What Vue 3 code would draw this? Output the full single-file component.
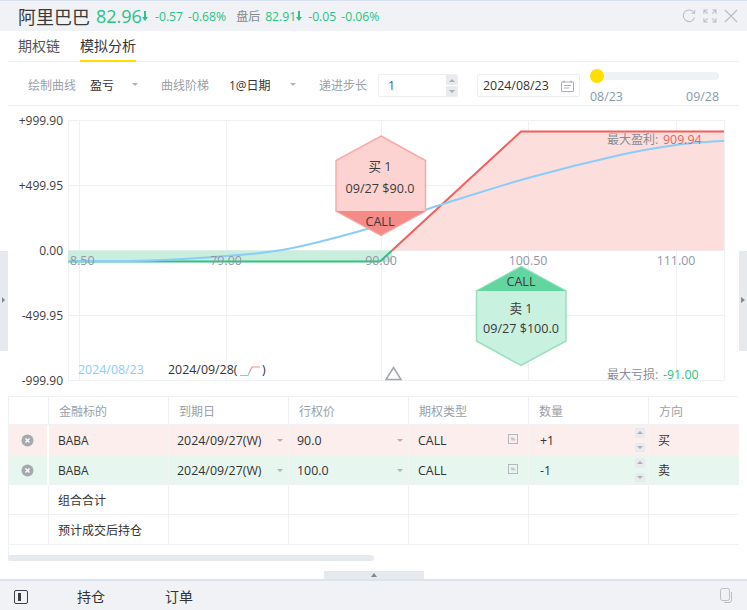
<script setup>
const hLines = [120, 185, 250, 315, 380]
const vLines = [79, 226, 381, 528, 676]
const yLabels = [
  { t: '+999.90', y: 125 },
  { t: '+499.95', y: 190 },
  { t: '0.00', y: 255 },
  { t: '-499.95', y: 320 },
  { t: '-999.90', y: 385 }
]
const xLabels = [
  { t: '79.00', x: 226 },
  { t: '90.00', x: 381 },
  { t: '100.50', x: 528 },
  { t: '111.00', x: 676 }
]
const heads = ['', '金融标的', '到期日', '行权价', '期权类型', '数量', '方向']
const legs = [
  { cls: 'buy', strike: '90.0', qty: '+1', dir: '买' },
  { cls: 'sell', strike: '100.0', qty: '-1', dir: '卖' }
]
const extras = ['组合合计', '预计成交后持仓']

// theoretical value curve, sampled from the chart and smoothed
const pts = [[68,261],[150,260.5],[226,256],[290,248.5],[381,225],[440,205],[528,178],[620,155],[676,145],[724,140.7]]
const curve = pts.reduce((d, p, i) => {
  if (i === 0) return `M${p[0]} ${p[1]}`
  const p0 = pts[Math.max(i - 2, 0)]
  const p1 = pts[i - 1]
  const p3 = pts[Math.min(i + 1, pts.length - 1)]
  const c1 = [p1[0] + (p[0] - p0[0]) / 6, p1[1] + (p[1] - p0[1]) / 6]
  const c2 = [p[0] - (p3[0] - p1[0]) / 6, p[1] - (p3[1] - p1[1]) / 6]
  return `${d}C${c1[0].toFixed(1)} ${c1[1].toFixed(1)} ${c2[0].toFixed(1)} ${c2[1].toFixed(1)} ${p[0]} ${p[1]}`
}, '')
</script>

<template>
  <div class="app">
    <header class="top">
      <span class="name">阿里巴巴</span>
      <span class="price">82.96</span>
      <svg class="arrow" width="6" height="10" viewBox="0 0 6 10"><path d="M2 0h2v6h2L3 10 0 6h2z" fill="#27c485" /></svg>
      <span class="chg first">-0.57</span>
      <span class="chg">-0.68%</span>
      <span class="post">盘后</span>
      <span class="chg post-price">82.91</span>
      <svg class="arrow a2" width="6" height="10" viewBox="0 0 6 10"><path d="M2 0h2v6h2L3 10 0 6h2z" fill="#27c485" /></svg>
      <span class="chg first">-0.05</span>
      <span class="chg">-0.06%</span>
      <div class="win">
        <svg width="14" height="14" viewBox="0 0 15 15" fill="none" stroke="#b9bdc6" stroke-width="1.1"><path d="M13 4.2A6.2 6.2 0 1 0 13.6 9" /><path d="M13.6 1.4v3.2h-3.2" /></svg>
        <svg width="14" height="14" viewBox="0 0 15 15" fill="none" stroke="#b9bdc6" stroke-width="1.1"><path d="M1 5V1h4M1 1l4 4M10 1h4v4M14 1l-4 4M1 10v4h4M1 14l4-4M10 14h4v-4M14 14l-4-4" /></svg>
        <svg width="14" height="14" viewBox="0 0 14 14" fill="none" stroke="#b9bdc6" stroke-width="1.1"><path d="M1 1l12 12M13 1L1 13" /></svg>
      </div>
    </header>

    <nav class="tabs">
      <span class="tab">期权链</span>
      <span class="tab on">模拟分析</span>
    </nav>

    <section class="tools">
      <span class="lbl">绘制曲线</span>
      <span class="val v1">盈亏</span>
      <i class="caret"></i>
      <span class="lbl l2">曲线阶梯</span>
      <span class="val v2">1@日期</span>
      <i class="caret"></i>
      <span class="lbl l3">递进步长</span>
      <div class="num">
        <span>1</span>
        <div class="steps"><b class="up"></b><b class="down"></b></div>
      </div>
      <div class="date">
        <span>2024/08/23</span>
        <svg width="13" height="12" viewBox="0 0 13 12" fill="none" stroke="#a9aeb8"><path d="M.5 2h12v9.5H.5zM3 .5V3M10 .5V3M3 5.500h7M3 8h5" /></svg>
      </div>
      <div class="slider">
        <div class="track"><span class="knob"></span></div>
        <div class="ends"><span>08/23</span><span>09/28</span></div>
      </div>
    </section>

    <svg class="chart" width="747" height="290" viewBox="0 106 747 290">
      <rect x="0" y="251" width="8" height="100" fill="#e6eaef" />
      <path d="M2 297l3 3-3 3z" fill="#7d8798" />
      <rect x="739" y="251" width="8" height="100" fill="#e6eaef" />
      <path d="M741 297l4 3-4 3z" fill="#7d8798" />

      <g stroke="#eef0f3" stroke-width="1">
        <line v-for="y in hLines" :key="y" x1="68" x2="724" :y1="y + 0.5" :y2="y + 0.5" />
        <line v-for="x in vLines" :key="x" :x1="x + 0.5" :x2="x + 0.5" y1="120" y2="380" />
        <line x1="68.5" x2="68.5" y1="120" y2="380" />
        <line x1="724.5" x2="724.5" y1="120" y2="380" />
      </g>

      <path d="M68 250.500H392V262H68z" fill="#c9eedd" />
      <path d="M392 250.500L521 131.500H724V250.500z" fill="#fcdcda" fill-opacity=".92" />
      <line x1="68" x2="380" y1="261.500" y2="261.500" stroke="#2ec27e" stroke-width="2" />
      <line x1="380" y1="261.500" x2="392" y2="250.500" stroke="#2ec27e" stroke-width="2" />
      <path d="M392 250.500L521 131.500H724" fill="none" stroke="#f25f5c" stroke-width="2" />
      <path :d="curve" fill="none" stroke="#8accfa" stroke-width="2" />

      <g class="axis">
        <text v-for="l in yLabels" :key="l.t" x="63" :y="l.y" text-anchor="end">{{ l.t }}</text>
      </g>
      <g class="xaxis">
        <text x="70" y="265">8.50</text>
        <text v-for="l in xLabels" :key="l.t" :x="l.x" y="265" text-anchor="middle">{{ l.t }}</text>
      </g>

      <path d="M381 136L425.500 160.500V211L381 235.500L336 211V160.500z" fill="#fdcfce" fill-opacity=".92" stroke="#fba9a6" stroke-width="1.500" />
      <path d="M336.500 211H425L381 235z" fill="#f58b87" />
      <path d="M521 266.500L566 291V341L521 365.500L476.500 341V291z" fill="#c6f0dd" fill-opacity=".95" stroke="#96e1be" stroke-width="1.500" />
      <path d="M477 291H565.500L521 267z" fill="#62d5a1" />
      <g class="hex">
        <text x="380" y="171" text-anchor="middle">买 1</text>
        <text x="380" y="193" text-anchor="middle">09/27 $90.0</text>
        <text x="380" y="226" text-anchor="middle">CALL</text>
        <text x="521" y="286" text-anchor="middle">CALL</text>
        <text x="521" y="313" text-anchor="middle">卖 1</text>
        <text x="521" y="333" text-anchor="middle">09/27 $100.0</text>
      </g>

      <path d="M393.500 367.500L401 379.500H386z" fill="#fff" stroke="#a3a6ab" stroke-width="1.500" />

      <text class="legend blue" x="78" y="374">2024/08/23</text>
      <text class="legend" x="168" y="374">2024/09/28(</text>
      <path d="M240 375.500H248L249.500 372" fill="none" stroke="#7fdcb0" stroke-width="1.200" />
      <path d="M249.500 372L252 367H260" fill="none" stroke="#f58b87" stroke-width="1.200" />
      <text class="legend" x="262" y="374">)</text>

      <text class="stat" x="607" y="144">最大盈利:</text>
      <text class="stat num-t red" x="663" y="144">909.94</text>
      <text class="stat" x="607" y="379">最大亏损:</text>
      <text class="stat num-t green" x="663" y="379">-91.00</text>
    </svg>

    <section class="grid">
      <div v-for="(h, i) in heads" :key="'h' + i" class="cell head">{{ h }}</div>
      <template v-for="leg in legs" :key="leg.qty">
        <div class="cell" :class="leg.cls">
          <svg class="remove" width="13" height="13" viewBox="0 0 13 13"><circle cx="6.500" cy="6.500" r="6" fill="#a5a8ae" /><path d="M4.500 4.500l4 4M8.500 4.500l-4 4" stroke="#fff" stroke-width="1.500" /></svg>
        </div>
        <div class="cell sym" :class="leg.cls">BABA</div>
        <div class="cell exp wide" :class="leg.cls">2024/09/27(W)<i class="caret"></i></div>
        <div class="cell exp wide" :class="leg.cls">{{ leg.strike }}<i class="caret"></i></div>
        <div class="cell exp wide kind" :class="leg.cls">CALL
          <svg width="10" height="10" viewBox="0 0 10 10"><rect x=".5" y=".5" width="9" height="9" fill="none" stroke="#b4b7bd" /><path d="M2.500 3.500h3l2 2v1h-4z" fill="#c6c9ce" /></svg>
        </div>
        <div class="cell exp wide qty" :class="leg.cls">{{ leg.qty }}
          <div class="mini"><b class="up"></b><b class="down"></b></div>
        </div>
        <div class="cell dir" :class="leg.cls">{{ leg.dir }}</div>
      </template>
      <template v-for="e in extras" :key="e">
        <div class="cell"></div>
        <div class="cell sym">{{ e }}</div>
        <div v-for="n in 5" :key="n" class="cell"></div>
      </template>
    </section>

    <div class="scroll"><span></span></div>
    <div class="grip"><i></i></div>

    <footer class="foot">
      <svg class="panel" width="14" height="14" viewBox="0 0 14 14"><rect x=".5" y=".5" width="13" height="13" rx="1.500" fill="none" stroke="#3a3f47" /><rect x="4" y="3" width="3" height="8" fill="#3a3f47" /></svg>
      <span class="ft t1">持仓</span>
      <span class="ft t2">订单</span>
      <svg class="copy" width="15" height="15" viewBox="0 0 15 15" fill="none" stroke="#b9bdc6"><rect x="1.500" y=".5" width="9" height="12" rx="2" /><path d="M12.500 4v8a2.500 2.500 0 0 1-2.500 2.500H5" /></svg>
    </footer>
  </div>
</template>

<style>
html, body { margin: 0; background: #fff; }
</style>

<style scoped>
.app {
  width: 747px;
  height: 610px;
  overflow: hidden;
  background: #fff;
  color: #333;
  font-family: "Open Sans", "Noto Sans CJK SC", sans-serif;
  font-size: 12px;
}
.top {
  height: 30px;
  border-top: 1px solid #d6e0ef;
  background: #f0f2f5;
  display: flex;
  align-items: center;
  padding-left: 18px;
}
.name { font-size: 18px; color: #3a3a3a; width: 78px; }
.price { font-size: 18px; color: #27c485; width: 46px; }
.arrow { margin-right: 7px; }
.arrow.a2 { margin-right: 6px; }
.chg { color: #27c485; font-size: 12.200px; margin-right: 5px; }
.post { color: #85898f; margin-left: 5px; width: 29px; }
.post-price { margin-right: 0; }
.win { margin-left: auto; margin-right: 9px; display: flex; gap: 7px; align-items: center; }

.tabs {
  height: 30px;
  margin: 0 8px;
  padding-left: 10px;
  border-bottom: 1px solid #eceef1;
  display: flex;
  gap: 20px;
}
.tab {
  font-size: 14px;
  line-height: 30px;
  height: 30px;
  color: #555;
}
.tab.on { color: #333; border-bottom: 2px solid #ffdd00; box-sizing: border-box; height: 31px; }

.tools {
  height: 41px;
  margin: 0 8px;
  padding: 2px 0 0 20px;
  border-bottom: 1px solid #eceef1;
  display: flex;
  align-items: center;
}
.lbl { color: #9a9fa8; width: 48px; flex: none; }
.val { color: #333; flex: none; }
.v1 { margin-left: 14px; width: 42px; }
.v2 { margin-left: 20px; width: 61px; }
.caret {
  display: inline-block;
  width: 0;
  height: 0;
  border: 3px solid transparent;
  border-top: 3px solid #aeb2b9;
  border-bottom: 0;
  flex: none;
}
.l2, .l3 { margin-left: 23px; }
.num {
  margin: 2px 0 0 11px;
  width: 80px;
  height: 23px;
  box-sizing: border-box;
  border: 1px solid #eceef1;
  border-radius: 2px;
  display: flex;
  align-items: center;
  justify-content: space-between;
  padding-left: 9px;
  color: #2d5f9e;
  flex: none;
  font-size: 12.400px;
}
.steps { width: 11px; height: 21px; display: flex; flex-direction: column; gap: 1px; }
.steps b, .mini b { flex: 1; background: #e8eaee; display: flex; align-items: center; justify-content: center; border-radius: 1px; }
.up::after, .down::after { content: ""; border: 3px solid transparent; }
.up::after { border-top: 0; border-bottom: 3px solid #aab0ba; }
.down::after { border-bottom: 0; border-top: 3px solid #aab0ba; }
.date {
  margin: 2px 0 0 19px;
  width: 103px;
  height: 23px;
  box-sizing: border-box;
  border: 1px solid #eceef1;
  border-radius: 2px;
  display: flex;
  align-items: center;
  justify-content: space-between;
  padding: 0 5px;
  flex: none;
  color: #333;
  font-size: 12.400px;
}
.slider { margin-left: 10px; width: 129px; flex: none; align-self: flex-start; padding-top: 8px; }
.track { height: 8px; background: #f0f1f5; border-radius: 4px; position: relative; }
.knob {
  position: absolute;
  left: 0;
  top: -3px;
  width: 14px;
  height: 14px;
  border-radius: 50%;
  background: #ffdf00;
}
.ends { display: flex; justify-content: space-between; color: #8a98ad; margin-top: 9px; line-height: 16px; font-size: 12.400px; }

.chart { display: block; font-family: "Open Sans", "Noto Sans CJK SC", sans-serif; font-size: 12px; }
.axis text { fill: #3f3f3f; font-size: 12px; }
.xaxis text { fill: #8f97a8; font-size: 12.400px; }
.hex text { fill: #3a3a3a; font-size: 12.600px; }
.legend { fill: #333; font-size: 12.400px; }
.legend.blue { fill: #8accfa; }
.stat { fill: #888c94; font-size: 12px; }
.stat.num-t { font-size: 12.400px; }
.stat.red { fill: #f0605c; }
.stat.green { fill: #2ec27e; }

.grid {
  margin-left: 8px;
  width: 730px;
  display: grid;
  grid-template-columns: 40px 120px 120px 120px 120px 120px 90px;
  grid-template-rows: 28px 30px 30px 30px 30px;
  border-top: 1px solid #f0f1f5;
  border-left: 1px solid #f0f1f5;
}
.cell {
  box-sizing: border-box;
  border-right: 1px solid #f0f1f5;
  border-bottom: 1px solid #f0f1f5;
  display: flex;
  align-items: center;
  padding-left: 10px;
  padding-top: 1px;
  white-space: nowrap;
  min-width: 0;
  position: relative;
}
.cell:nth-child(7n) { border-right: 0; }
.head { color: #9a9fa8; padding-top: 0; }
.buy { background: #fbeeed; border-bottom: 0; border-right: 1px solid #f8f3f3; padding-top: 0; }
.sell { background: #e8f6f0; border-bottom: 1px solid #f0f1f5; border-right: 1px solid #f0f6f3; }
.buy:nth-child(7n+1), .sell:nth-child(7n+1) { border-right: 2px solid #fff; }
.sym { padding-left: 9px; color: #333; }
.exp { padding-left: 8px; }
.kind { padding-left: 9px; }
.wide { font-size: 12.400px; }
.qty { padding-left: 11px; }
.exp .caret { position: absolute; right: 5px; top: 14px; }
.exp svg { position: absolute; right: 10px; top: 9px; }
.dir { padding-left: 9px; }
.remove { margin-left: 2px; }
.mini { position: absolute; right: 3px; top: 3px; width: 10px; height: 24px; display: flex; flex-direction: column; gap: 5px; }

.scroll { margin-left: 8px; height: 6px; border-left: 1px solid #f0f1f5; padding-top: 10px; }
.scroll span { display: block; width: 366px; height: 6px; background: #e6eaef; border-radius: 3px; margin-left: -1px; }
.grip {
  margin: 10px 0 0 324px;
  width: 100px;
  height: 8px;
  background: #e6eaef;
  display: flex;
  align-items: center;
  justify-content: center;
}
.grip i { border: 3px solid transparent; border-top: 0; border-bottom: 4px solid #7d8798; }

.foot {
  height: 26px;
  padding: 3px 13px 0 14px;
  border-top: 2px solid #dbe3ec;
  background: #f0f2f5;
  display: flex;
  align-items: center;
}
.ft { font-size: 14px; color: #333; flex: none; line-height: 26px; }
.t1 { margin-left: 49px; }
.t2 { margin-left: 60px; }
.copy { margin-left: auto; margin-bottom: 4px; }
</style>
